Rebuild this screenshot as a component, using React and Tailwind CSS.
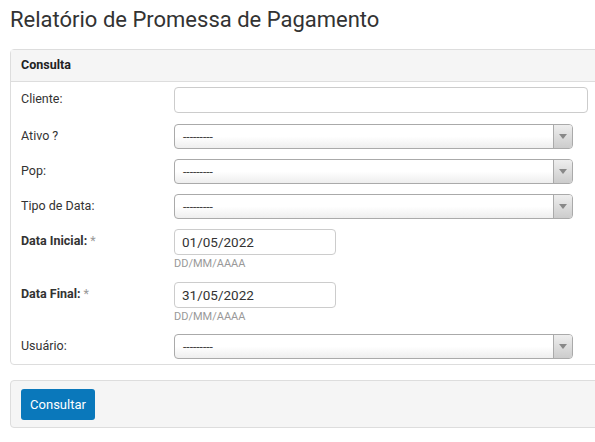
import React from 'react';

function Select() {
  return (
    <div className="flex h-[25px] w-[399px] rounded-[4px] border border-[#aaa] bg-gradient-to-b from-white from-50% to-[#eee] overflow-hidden">
      <div className="flex-1 flex items-center pl-[8px] text-[12px] text-[#444] leading-none">---------</div>
      <div className="w-[19px] border-l border-[#aaa] bg-gradient-to-b from-[#eee] to-[#ccc] flex items-center justify-center">
        <svg width="8" height="5" viewBox="0 0 8 5">
          <path d="M0 0h8L4 5z" fill="#888" />
        </svg>
      </div>
    </div>
  );
}

function Row({ label, bold, children, className }) {
  return (
    <div className={`flex items-start ${className}`}>
      <div className={`w-[153px] flex items-center h-[25px] text-[12.5px] text-[#333] ${bold ? 'font-bold' : ''}`}>
        {label}
        {bold && <span className="font-normal text-[#999] ml-[3px]">*</span>}
      </div>
      {children}
    </div>
  );
}

export default function App() {
  return (
    <div className="w-[595px] h-[442px] overflow-hidden bg-white font-['Roboto',sans-serif] text-[#333]">
      <h1 className="pl-[10px] pt-[6px] h-[49px] text-[22px] leading-[28px] text-[#333] font-normal">
        Relatório de Promessa de Pagamento
      </h1>

      <div className="ml-[10px] w-[600px] border border-[#ddd] rounded-[4px]">
        <div className="h-[32px] bg-[#f5f5f5] border-b border-[#ddd] px-[10px] flex items-center text-[12.5px] font-bold text-[#222]">
          Consulta
        </div>
        <div className="px-[10px] pt-[5px] pb-[5px]">
          <Row label="Cliente:">
            <input
              className="h-[26px] w-[414px] border border-[#ccc] rounded-[4px] bg-white outline-none"
              defaultValue=""
            />
          </Row>
          <Row label="Ativo ?" className="mt-[11px]"><Select /></Row>
          <Row label="Pop:" className="mt-[10px]"><Select /></Row>
          <Row label="Tipo de Data:" className="mt-[10px]"><Select /></Row>
          <Row label="Data Inicial:" bold className="mt-[10px]">
            <div className="flex flex-col">
              <div className="h-[26px] w-[162px] border border-[#ccc] rounded-[4px] flex items-center px-[7px] text-[13.5px] text-[#333]">01/05/2022</div>
              <div className="mt-[2px] text-[11px] leading-[14px] text-[#999]">DD/MM/AAAA</div>
            </div>
          </Row>
          <Row label="Data Final:" bold className="mt-[11px]">
            <div className="flex flex-col">
              <div className="h-[26px] w-[162px] border border-[#ccc] rounded-[4px] flex items-center px-[7px] text-[13.5px] text-[#333]">31/05/2022</div>
              <div className="mt-[2px] text-[11px] leading-[14px] text-[#999]">DD/MM/AAAA</div>
            </div>
          </Row>
          <Row label="Usuário:" className="mt-[10px]"><Select /></Row>
        </div>
      </div>

      <div className="ml-[10px] mt-[15px] w-[600px] border border-[#ddd] rounded-[4px] bg-[#f5f5f5] px-[10px] pt-[8px] pb-[7px]">
        <button className="h-[31px] w-[74px] rounded-[3px] bg-[#0a78bb] text-white text-[13px]">
          Consultar
        </button>
      </div>
    </div>
  );
}
